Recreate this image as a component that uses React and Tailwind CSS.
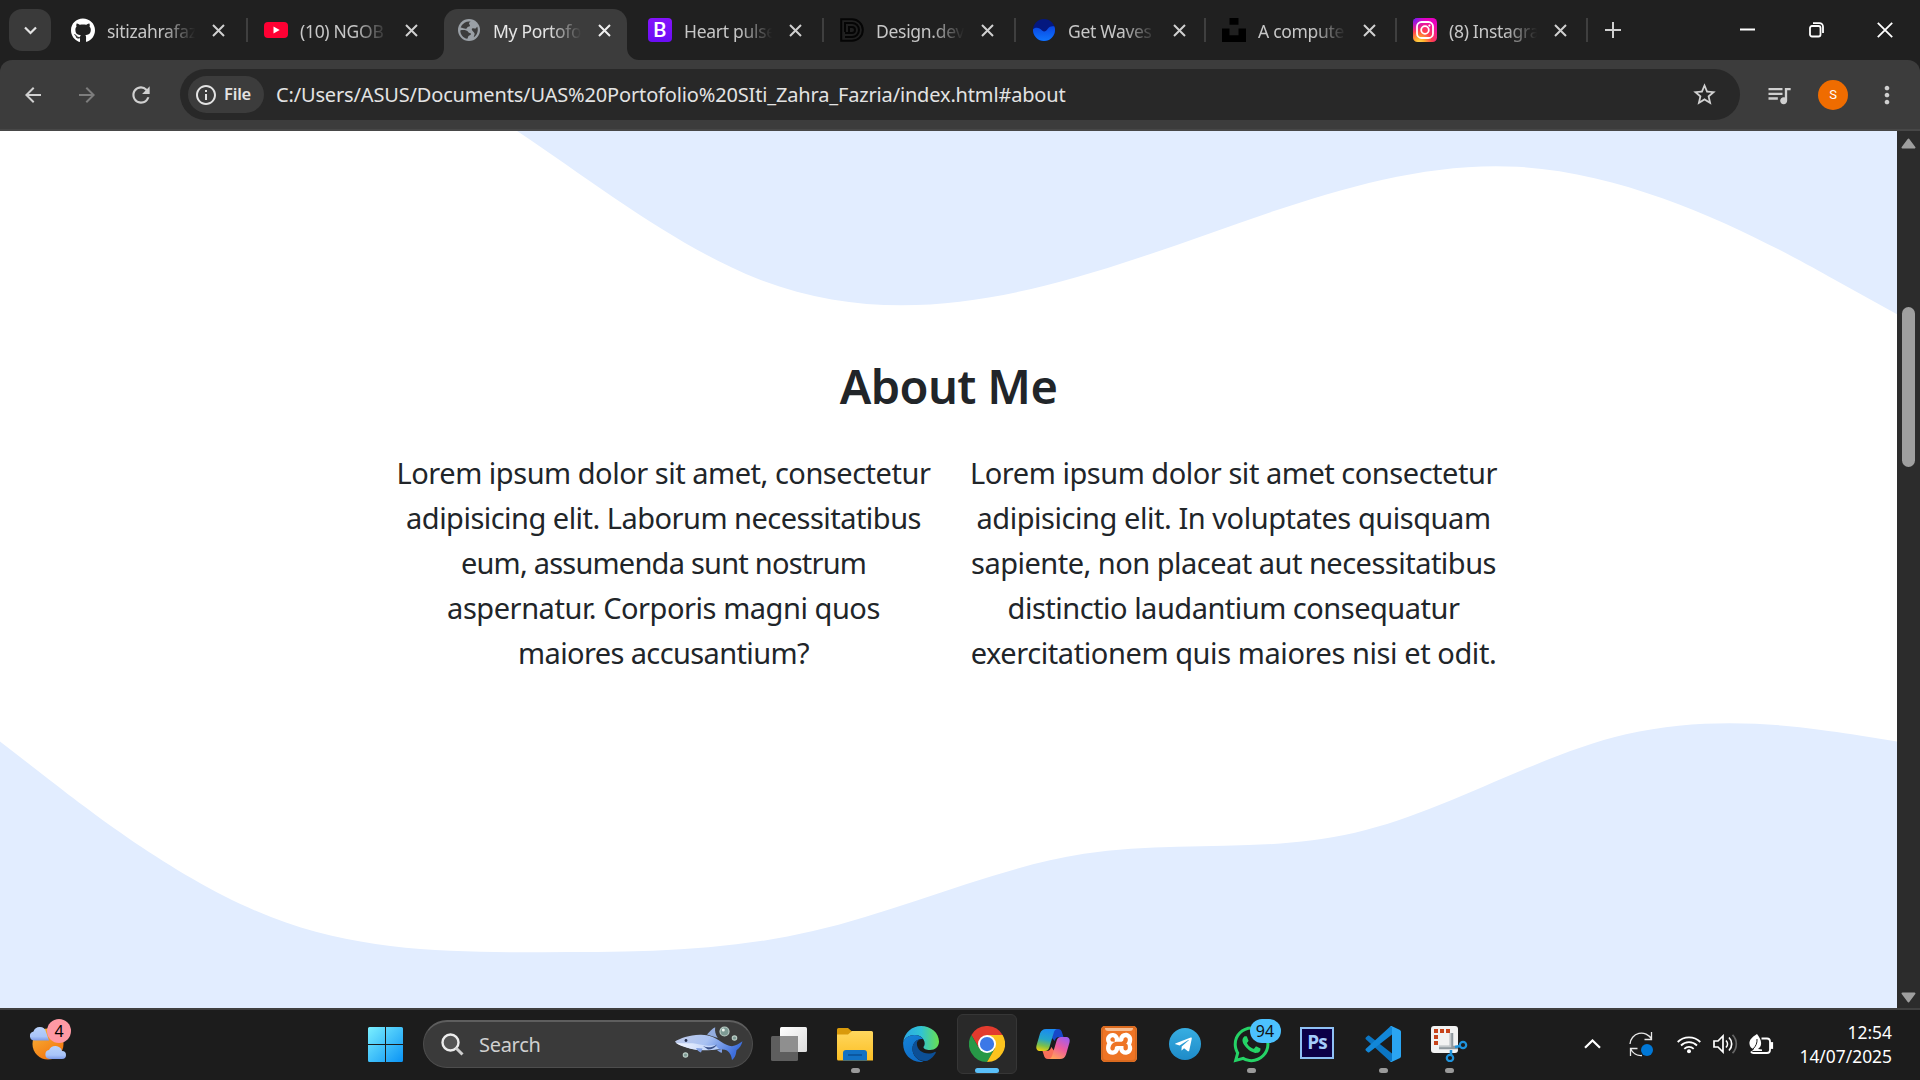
import React from "react";
import { FaGithub, FaTelegramPlane, FaWhatsapp } from "react-icons/fa";
import { MdArrowBack, MdArrowForward, MdRefresh, MdStarBorder, MdQueueMusic, MdMoreVert, MdInfoOutline } from "react-icons/md";
import { SiXampp } from "react-icons/si";

/* Smooth wave: a uniform B-spline through evenly spaced control heights. */
function wave(points, step, bottom) {
  const n = points.length - 1;
  let d = `M0,${points[0]}L${step / 6},${(5 * points[0] + points[1]) / 6}`;
  for (let i = 1; i <= n; i++) {
    const a = points[i - 1];
    const b = points[i];
    const last = i === n;
    const ex = last ? (i - 1 / 6) * step : i * step;
    const ey = last ? (a + 5 * b) / 6 : (a + 4 * b + points[i + 1]) / 6;
    d += `C${(i - 2 / 3) * step},${(2 * a + b) / 3},${(i - 1 / 3) * step},${(a + 2 * b) / 3},${ex},${ey}`;
  }
  return d + `L${n * step},${points[n]}L${n * step},${bottom}L0,${bottom}Z`;
}
const heights = (base, ks) => ks.map((k) => base + k * 42.16);
const TOP_WAVE = wave(heights(183.3, [-6, -8, 1, -1, -5, 0]), 379.4, 877);
const BOTTOM_WAVE = wave(heights(610.4, [0, 5, 5, 5, 2, 3, -1, 0]), 271, 877);

function Cross({ size = 13, className = "" }) {
  return (
    <svg width={size} height={size} viewBox="0 0 13 13" className={className}>
      <path d="M1 1l11 11M12 1L1 12" stroke="currentColor" strokeWidth="2" fill="none" />
    </svg>
  );
}

const YouTube = () => (
  <svg width="24" height="24" viewBox="0 0 24 24">
    <rect y="4" width="24" height="16" rx="4" fill="#ff0033" />
    <path d="M9.500 8.500v7l6.200-3.500z" fill="#fff" />
  </svg>
);
const Globe = () => (
  <svg width="24" height="24" viewBox="0 0 24 24">
    <circle cx="12" cy="12" r="11" fill="#9aa0a6" />
    <path d="M12.500 3.400c-1.600 1.300-2 2-.6 3.200 1 1 .2 1.900-1.200 2.300-1 .3-.6 1.900-2 2.300-1.300.3-3.300-.2-5.300-.4A8.800 8.800 0 0 1 12.500 3.400z" fill="#3c3c3c" transform="rotate(8 12 12)" />
    <path d="M3.300 12.400c2.700-.6 6.700-.4 7.900 1.500.7 1.200 2.700.8 2.800 2 0 1.300-2.200 1.200-2.800 2.500-.4.9-.3 1.600-.9 2.300-4-.7-7-4.300-7-8.300z" fill="#3c3c3c" />
    <path d="M15.200 10.500c1.500-.9 2.300.4 3.400 0 1-.4.800-1.500 1.700-1.700 1.300 3.700 0 8.200-3.400 10.500-.5-1.500 1.300-2.500.6-4.100-.6-1.300-3.900-3.400-2.300-4.700z" fill="#3c3c3c" />
  </svg>
);
const BootstrapMark = () => (
  <div className="flex h-6 w-6 items-center justify-center rounded-[4px] bg-gradient-to-b from-[#8513fb] to-[#6b0df5] font-['Roboto',sans-serif] text-[21px] leading-none font-medium text-white">B</div>
);
const DesignMark = () => (
  <svg width="24" height="24" viewBox="0 0 24 24" fill="none" stroke="#050505" strokeWidth="2">
    <path d="M1.200 1.200H12a10.800 10.800 0 0 1 0 21.600H1.200z" />
    <path d="M5 14V5h7a7 7 0 0 1 0 14H5M9 16V9h3a3 3 0 0 1 0 6H5" />
  </svg>
);
const WavesMark = () => (
  <svg width="24" height="24" viewBox="0 0 24 24">
    <defs>
      <clipPath id="disc"><circle cx="12" cy="12" r="11" /></clipPath>
      <linearGradient id="sea" x1="0" y1="0" x2="0" y2="1"><stop offset="0" stopColor="#0a45e0" /><stop offset="1" stopColor="#0f78ff" /></linearGradient>
    </defs>
    <g clipPath="url(#disc)">
      <rect width="24" height="24" fill="#04187f" />
      <path d="M0 12C4 8.500 7 9.500 10 12.500c2.500 2.300 4 .5 6-2S20.500 7.500 24 9v15H0z" fill="url(#sea)" />
    </g>
  </svg>
);
const UnsplashMark = () => (
  <svg width="24" height="24" viewBox="0 0 24 24" fill="#000">
    <path d="M7.500 0h9v6.800h-9zM0 10.500h7.500v6.800h9v-6.800H24V24H0z" />
  </svg>
);
const InstagramMark = () => (
  <svg width="24" height="24" viewBox="0 0 24 24" fill="none" stroke="#fff">
    <defs>
      <radialGradient id="ig1" cx=".27" cy="1.050" r="1.050">
        <stop offset="0" stopColor="#fd5" /><stop offset=".2" stopColor="#ffb02c" />
        <stop offset=".5" stopColor="#ff3f4f" /><stop offset="1" stopColor="#e800c0" />
      </radialGradient>
      <radialGradient id="ig2" cx="0" cy="0" r=".6">
        <stop offset="0" stopColor="#4a2cff" /><stop offset="1" stopColor="#c800e8" stopOpacity="0" />
      </radialGradient>
    </defs>
    <rect width="24" height="24" rx="4.500" fill="url(#ig1)" stroke="none" />
    <rect width="24" height="24" rx="4.500" fill="url(#ig2)" stroke="none" />
    <rect x="4" y="4" width="16" height="16" rx="4.600" strokeWidth="1.800" />
    <circle cx="12" cy="12" r="3.800" strokeWidth="1.800" />
    <circle cx="16.400" cy="7.600" r="1.100" fill="#fff" stroke="none" />
  </svg>
);

const TABS = [
  { icon: <FaGithub size={25} color="#fff" />, title: "sitizahrafaz", width: "w-[193px]", divider: true },
  { icon: <YouTube />, title: "(10) NGOB", width: "w-[193px]" },
  { icon: <Globe />, title: "My Portofo", width: "w-[191px]", active: true },
  { icon: <BootstrapMark />, title: "Heart pulse", width: "w-[192px]", divider: true },
  { icon: <DesignMark />, title: "Design.dev", width: "w-[192px]", divider: true },
  { icon: <WavesMark />, title: "Get Waves", width: "w-[190px]", divider: true },
  { icon: <UnsplashMark />, title: "A compute", width: "w-[191px]", divider: true },
  { icon: <InstagramMark />, title: "(8) Instagra", width: "w-[191px]", divider: true },
];

function Tab({ icon, title, width, active, divider }) {
  return (
    <div className={`relative flex h-[60px] shrink-0 items-center ${width}`}>
      {active && (
        <div className="absolute top-[9px] right-[5px] bottom-0 left-[3px] rounded-t-[14px] bg-[#3c3c3c]">
          <svg className="absolute bottom-0 -left-3" width="12" height="12"><path d="M12 0v12H0A12 12 0 0 0 12 0z" fill="#3c3c3c" /></svg>
          <svg className="absolute -right-3 bottom-0" width="12" height="12"><path d="M0 0v12h12A12 12 0 0 1 0 0z" fill="#3c3c3c" /></svg>
        </div>
      )}
      <div className="relative ml-4 flex h-6 w-6 items-center justify-center">{icon}</div>
      <div className={`relative mt-[2px] ml-3 w-[92px] text-[17.500px] tracking-[-0.300px] whitespace-nowrap [mask-image:linear-gradient(to_right,#000_60%,transparent_96%)] ${active ? "text-[#e6e6e6]" : "text-[#c7c7c7]"}`}>{title}</div>
      <Cross className={`relative ml-[13px] shrink-0 ${active ? "text-[#f0f0f0]" : "text-[#d0d0d0]"}`} />
      {divider && <div className="absolute right-0 h-6 w-[2px] bg-[#3f3f3f]" />}
    </div>
  );
}

function TabStrip() {
  return (
    <div className="flex h-[60px] items-center bg-[#202020]">
      <div className="ml-[9px] flex h-[42px] w-[42px] items-center justify-center rounded-[13px] bg-[#3a3a3a]">
        <svg width="13" height="9" viewBox="0 0 13 9"><path d="M1 1.500l5.500 5.500L12 1.500" stroke="#e3e3e3" strokeWidth="2.200" fill="none" /></svg>
      </div>
      <div className="ml-1 flex">{TABS.map((t) => <Tab key={t.title} {...t} />)}</div>
      <svg className="ml-[17px]" width="16" height="16"><path d="M8 0v16M0 8h16" stroke="#d0d0d0" strokeWidth="2" /></svg>
      <div className="ml-auto flex items-center text-white">
        <svg width="15" height="16"><path d="M0 7.500h15" stroke="#fff" strokeWidth="2" /></svg>
        <svg className="ml-[54px]" width="15" height="16" fill="none" stroke="#fff" strokeWidth="1.800">
          <rect x="1" y="4" width="10.500" height="10.500" rx="2" /><path d="M4 1.200h6.500a3.500 3.500 0 0 1 3.500 3.500V11" />
        </svg>
        <svg className="mr-[27px] ml-[53px]" width="16" height="16"><path d="M.8.800l14.400 14.400M15.200.800L.8 15.200" stroke="#fff" strokeWidth="1.800" /></svg>
      </div>
    </div>
  );
}

function Toolbar() {
  return (
    <div className="h-[71px] bg-[#202020]">
      <div className="flex h-[71px] items-center rounded-t-[12px] border-b-2 border-[#474747] bg-[#3c3c3c]">
        <MdArrowBack className="ml-[21px]" size={24} color="#d0d0d0" />
        <MdArrowForward className="ml-[30px]" size={24} color="#7d7d7d" />
        <MdRefresh className="ml-[29px]" size={26} color="#d0d0d0" />
        <div className="ml-[26px] flex h-[51px] w-[1560px] items-center rounded-full bg-[#282828] pl-2">
          <div className="flex h-[37px] w-[76px] items-center rounded-full bg-[#3c3c3c] pl-[6px]">
            <MdInfoOutline size={24} color="#e3e3e3" />
            <span className="ml-[6px] text-[16.500px] font-semibold tracking-[-0.200px] text-[#e3e3e3]">File</span>
          </div>
          <span className="ml-3 text-[20px] tracking-[-0.160px] whitespace-nowrap text-[#e3e3e3]">C:/Users/ASUS/Documents/UAS%20Portofolio%20SIti_Zahra_Fazria/index.html#about</span>
          <MdStarBorder className="mr-[22px] ml-auto" size={27} color="#d0d0d0" />
        </div>
        <MdQueueMusic className="ml-[25px]" size={28} color="#d0d0d0" />
        <div className="ml-[25px] flex h-[30px] w-[30px] items-center justify-center rounded-full bg-[#ef6c00] font-['Roboto',sans-serif] text-[13px] text-white">S</div>
        <MdMoreVert className="ml-[25px]" size={28} color="#d0d0d0" />
      </div>
    </div>
  );
}

const LEFT = [
  ["Lorem ipsum dolor sit amet, consectetur", "tracking-[-0.480px]"],
  ["adipisicing elit. Laborum necessitatibus", "tracking-[-0.520px]"],
  ["eum, assumenda sunt nostrum", "tracking-[-0.780px]"],
  ["aspernatur. Corporis magni quos", "tracking-[-0.460px]"],
  ["maiores accusantium?", "tracking-[-0.620px]"],
];
const RIGHT = [
  ["Lorem ipsum dolor sit amet consectetur", "tracking-[-0.470px]"],
  ["adipisicing elit. In voluptates quisquam", "tracking-[-0.450px]"],
  ["sapiente, non placeat aut necessitatibus", "tracking-[-0.510px]"],
  ["distinctio laudantium consequatur", "tracking-[-0.500px]"],
  ["exercitationem quis maiores nisi et odit.", "tracking-[-0.420px]"],
];

function Paragraph({ lines }) {
  return (
    <p className="w-[570px] text-center text-[29px] leading-[45px]">
      {lines.map(([text, tracking]) => <span key={text} className={`block whitespace-nowrap ${tracking}`}>{text}</span>)}
    </p>
  );
}

function Page() {
  return (
    <main className="flex h-[877px]">
      <section className="relative h-full w-[1897px] overflow-hidden bg-[#e2edff] text-[#212529]">
        <svg className="absolute inset-0" width="1897" height="877">
          <path d={TOP_WAVE} fill="#fff" />
          <path d={BOTTOM_WAVE} fill="#e2edff" />
        </svg>
        <div className="relative flex flex-col items-center pt-[226px]">
          <h2 className="text-[47px] leading-[58px] font-semibold tracking-[-0.600px]">About Me</h2>
          <div className="mt-[35px] flex">
            <Paragraph lines={LEFT} />
            <Paragraph lines={RIGHT} />
          </div>
        </div>
      </section>
      <div className="flex w-[23px] flex-col items-center bg-[#2c2c2c]">
        <svg className="mt-[7px]" width="15" height="11"><path d="M7.500 1.500L13.500 9.500h-12z" fill="#9f9f9f" stroke="#9f9f9f" strokeWidth="2" strokeLinejoin="round" /></svg>
        <div className="mt-[158px] h-[160px] w-[13px] rounded-full bg-[#9f9f9f]" />
        <svg className="mt-auto mb-[5px]" width="15" height="11"><path d="M7.500 9.500L13.500 1.500h-12z" fill="#9f9f9f" stroke="#9f9f9f" strokeWidth="2" strokeLinejoin="round" /></svg>
      </div>
    </main>
  );
}

const Weather = () => (
  <svg width="38" height="36" viewBox="0 0 38 36">
    <defs>
      <linearGradient id="sun" x1="0" y1="0" x2=".6" y2="1"><stop offset="0" stopColor="#f6b73c" /><stop offset="1" stopColor="#f5760e" /></linearGradient>
      <linearGradient id="cl" x1="0" y1="0" x2="0" y2="1"><stop offset="0" stopColor="#b9d2fb" /><stop offset=".7" stopColor="#a9c4f8" /><stop offset="1" stopColor="#7e9be8" /></linearGradient>
    </defs>
    <circle cx="19" cy="18" r="15.500" fill="url(#sun)" />
    <path d="M5.500 14.500a4.500 4.500 0 0 1-1-8.900A6.500 6.500 0 0 1 17 6l3 8.500z" fill="url(#cl)" />
    <path d="M20.500 33a4.500 4.500 0 0 1-.5-8.900 7 7 0 0 1 13 .9 4 4 0 0 1 0 8z" fill="url(#cl)" />
  </svg>
);
const WindowsLogo = () => (
  <svg width="35" height="35" viewBox="0 0 35 35">
    <defs><linearGradient id="win" gradientUnits="userSpaceOnUse" x1="0" y1="0" x2="35" y2="35"><stop offset="0" stopColor="#7bf0ff" /><stop offset="1" stopColor="#0a93f5" /></linearGradient></defs>
    <path d="M1.500 0H17v17H0V1.500A1.500 1.500 0 0 1 1.500 0zM18 0h15.500A1.500 1.500 0 0 1 35 1.500V17H18zM0 18h17v17H1.500A1.500 1.500 0 0 1 0 33.500zM18 18h17v15.500a1.500 1.500 0 0 1-1.500 1.500H18z" fill="url(#win)" />
  </svg>
);
const Shark = () => (
  <svg width="70" height="38" viewBox="0 0 70 38">
    <defs>
      <linearGradient id="sh" x1="0" y1="0" x2="1" y2=".3"><stop offset="0" stopColor="#c3cdea" /><stop offset=".5" stopColor="#a9c2f2" /><stop offset="1" stopColor="#3e6fdc" /></linearGradient>
      <linearGradient id="bl" x1="0" y1="0" x2="1" y2="0"><stop offset="0" stopColor="#f3f6ff" /><stop offset="1" stopColor="#b6cdf8" /></linearGradient>
    </defs>
    <path d="M34 8.500c3-3 5-6 8.200-7.300-.6 4 .3 7.300 2.600 10.800z" fill="#93acde" />
    <path d="M2 15.500c5-3.200 14-6.500 25-6.800 9-.3 15 3 21 7 4 2.500 7 4 11 4.500 4-.5 7-2.500 10.500-5-1 4-3 7-6 9-.5 3.500-1 7-4.500 9.800-.5-4-2-7.500-5-9.500-5-1.500-9-1.300-14-.8-9 .8-19 .3-26-2.200C9 19.500 3.500 18 2 15.500z" fill="url(#sh)" />
    <path d="M3 17c8 1 14-.5 20 .8 8 1.700 12 2.500 19 1.200l4 4c-9 1.500-22 2.200-31-1C9 20.200 5 19 3 17z" fill="url(#bl)" />
    <path d="M23 22c1 2 2.500 3.500 5 4.500l1.500-4zM44 24c1.500 1.500 3 2.500 5 2.800L49 23z" fill="#7f9edf" />
    <path d="M30 20c5 2.200 9 1.500 14-1.600-2 3.500-5 5-9 5z" fill="#3a5188" />
    <circle cx="13" cy="14.500" r="1.400" fill="#222b4a" />
    <g fill="#7d9a94" stroke="#b9ccc4" strokeWidth="1.200"><circle cx="51.500" cy="5.500" r="4.500" /><circle cx="61.500" cy="12" r="2.200" /><circle cx="12.500" cy="29" r="2.200" /></g>
    <circle cx="50.300" cy="4" r="1.500" fill="#eef5ef" />
  </svg>
);
const TaskView = () => (
  <svg width="36" height="36" viewBox="0 0 36 36">
    <defs><linearGradient id="tv" x1="0" y1="0" x2="1" y2="1"><stop offset="0" stopColor="#fff" /><stop offset="1" stopColor="#dcdcdc" /></linearGradient></defs>
    <rect x="9" y="1" width="27" height="25" rx="1.500" fill="url(#tv)" />
    <rect y="10" width="27" height="25" rx="1.500" fill="#6a6a6a" fillOpacity=".85" />
    <path d="M9 10h18v16H9z" fill="#8f8f8f" />
  </svg>
);
const Folder = () => (
  <svg width="36" height="36" viewBox="0 0 36 36">
    <defs><linearGradient id="fo" x1="0" y1="0" x2="0" y2="1"><stop offset="0" stopColor="#ffd75e" /><stop offset="1" stopColor="#fcbf23" /></linearGradient></defs>
    <path d="M0 3.500A1.500 1.500 0 0 1 1.500 2H11l4 3.500V10H0z" fill="#d99a0b" />
    <path d="M0 8.500h11l4-3.500h19.500A1.500 1.500 0 0 1 36 6.500v28H1.500A1.500 1.500 0 0 1 0 33z" fill="url(#fo)" />
    <path d="M6 34.500V27a3 3 0 0 1 3-3h18a3 3 0 0 1 3 3v7.500z" fill="#1271c4" />
    <path d="M11 29h14" stroke="#0a4f94" strokeWidth="1.500" />
  </svg>
);
const Edge = () => (
  <svg width="36" height="36" viewBox="0 0 36 36">
    <defs>
      <linearGradient id="e1" x1="0" y1=".4" x2="1" y2=".4"><stop offset="0" stopColor="#2aa7e6" /><stop offset=".5" stopColor="#30c3d4" /><stop offset="1" stopColor="#69e04f" /></linearGradient>
      <linearGradient id="e2" x1="0" y1="0" x2=".5" y2="1"><stop offset="0" stopColor="#1583d8" /><stop offset="1" stopColor="#0f6cc6" /></linearGradient>
    </defs>
    <circle cx="18" cy="18" r="18" fill="#1c1c1c" />
    <path d="M.2 16C1.500 6.500 9 0 18 0c10 0 18 7 18 15.500 0 5-4 8.500-9 8.500-4 0-6.500-1.500-6.500-2.800 0-.9 1.200-1.300 1.200-4C21.500 12.500 17 9 11.500 9 6 9 2 12 .2 16z" fill="url(#e1)" />
    <path d="M.2 16C2 12 6 9 11.500 9c4 0 7 1.700 8.800 4.200C15 12 9.500 16 9.500 23c0 6 4.500 11 11 12.800C9 37.500-.8 28.500.2 16z" fill="url(#e2)" />
    <path d="M16.500 13.600C12 14.500 9 18.500 9.500 24c.8 7 7.500 12.500 15 10.700 3.500-1.700 6.500-4.500 8.200-7.800.4-1-.4-1.300-1-1-2 1-4 1.500-6.300 1.500-6.500 0-11.500-4.500-11.500-9.500 0-1.700.6-3.100 2.600-4.300z" fill="#0c4f96" />
  </svg>
);
const Chrome = () => (
  <svg width="36" height="36" viewBox="0 0 48 48">
    <path d="M3.200 12A24 24 0 0 1 44.800 12H24L13.600 30z" fill="#e33b2e" />
    <path d="M3.200 12L13.600 30 24 24 34.400 30 24 48A24 24 0 0 1 3.200 12z" fill="#279847" />
    <path d="M44.800 12A24 24 0 0 1 24 48L34.400 30 24 24V12z" fill="#fcc31e" />
    <circle cx="24" cy="24" r="12" fill="#fff" /><circle cx="24" cy="24" r="9.500" fill="#3b78e7" />
  </svg>
);
const Copilot = () => (
  <svg width="36" height="36" viewBox="0 0 36 36">
    <defs>
      <linearGradient id="c1" x1=".4" y1="0" x2=".2" y2="1"><stop offset="0" stopColor="#1b8cf0" /><stop offset=".45" stopColor="#25a6c9" /><stop offset=".75" stopColor="#7cc04a" /><stop offset="1" stopColor="#f2d00e" /></linearGradient>
      <linearGradient id="c2" x1=".8" y1="0" x2=".3" y2="1"><stop offset="0" stopColor="#a05cf0" /><stop offset=".5" stopColor="#ee5c9e" /><stop offset="1" stopColor="#ffa05a" /></linearGradient>
    </defs>
    <path d="M18 3h5c2.500 0 3.500 1.500 4.200 4l1.300 4h-4c-3 0-4 1.500-4.800 4L17 12z" fill="#1747c8" />
    <path d="M17 33h-4c-2.500 0-3.500-1.500-4.200-4L7.500 25h4c3 0 4-1.500 4.800-4l3 4z" fill="#f9705a" />
    <path d="M11 3h11c-2 .6-2.800 2-3.500 4.500L14.500 21c-.8 2.800-2 4-4.500 4H5.500C2 25 .7 23 1.500 19.500l3.500-12C6 4.500 8 3 11 3z" fill="url(#c1)" />
    <path d="M25 33H14c2-.6 2.800-2 3.500-4.500L21.500 15c.8-2.800 2-4 4.500-4h4.500c3.500 0 4.800 2 4 5.500l-3.500 12c-1 3-3 4.500-6 4.500z" fill="url(#c2)" />
  </svg>
);
const Xampp = () => (
  <div className="relative h-9 w-9 rounded-[5px] bg-white">
    <SiXampp size={36} color="#ee7425" />
    <div className="absolute inset-0 rounded-[5px] border-2 border-[#d2661c]/70" />
    <div className="absolute top-[2px] left-1 h-[3px] w-7 rounded-b-full bg-[#f6bf95]" />
  </div>
);
const Telegram = () => (
  <div className="flex h-8 w-8 items-center justify-center rounded-full bg-gradient-to-b from-[#37aee2] to-[#1e8bc8]">
    <FaTelegramPlane size={19} color="#fff" className="mr-[3px]" />
  </div>
);
const WhatsApp = () => (
  <div className="relative">
    <FaWhatsapp size={41} color="#25d366" />
    <span className="absolute -top-[5px] -right-[9px] flex h-6 w-[31px] items-center justify-center rounded-full bg-[#4cc2ff] text-[16px] text-[#111]">94</span>
  </div>
);
const Photoshop = () => (
  <div className="-mt-[3px] flex h-8 w-[34px] items-center justify-center border-2 border-[#8fc1f5] bg-[#0c0047] font-['Open_Sans',sans-serif] text-[19px] font-bold tracking-[-1px] text-[#a5cdfb]">Ps</div>
);
const VSCode = () => (
  <svg width="36" height="36" viewBox="0 0 36 36">
    <path d="M.8 11.500l2-1.800c.5-.4 1-.4 1.500 0L27 27.500V36c-1 0-1.500-.3-2-.8L.8 13.300c-.5-.6-.5-1.200 0-1.800z" fill="#0b76c4" />
    <path d="M.8 24.500l2 1.800c.5.400 1 .4 1.500 0L27 8.500V0c-1 0-1.500.3-2 .8L.8 22.700c-.5.600-.5 1.200 0 1.800z" fill="#1287d8" />
    <path d="M26.500 0l8 3.700c1 .5 1.500 1.200 1.500 2.300v24c0 1.100-.5 1.800-1.500 2.300l-8 3.700c-.8.200-1.400-.2-2-.8 1 .6 2.500.1 2.500-1.200V2c0-1.300-1.500-1.800-2.500-1.200.6-.6 1.200-1 2-.8z" fill="#2aa5f2" />
  </svg>
);
const Snip = () => (
  <svg width="37" height="36" viewBox="0 0 37 36">
    <rect width="27" height="27" rx="3" fill="#f2f2f2" />
    <path d="M3 5h17M5 3v17" stroke="#c8431a" strokeWidth="4" strokeDasharray="4 2" fill="none" />
    <path d="M20.500 7v16M8 21.500h19" stroke="#8f989e" strokeWidth="3.500" fill="none" />
    <path d="M19.500 7v13.500H8" stroke="#c3c8cb" strokeWidth="1.500" fill="none" />
    <circle cx="19" cy="32" r="3.200" stroke="#1f93dc" strokeWidth="2.200" fill="none" />
    <circle cx="32" cy="19" r="3.200" stroke="#1f93dc" strokeWidth="2.200" fill="none" />
    <path d="M20 24v5M24 21l5-1" stroke="#1f93dc" strokeWidth="2.500" />
  </svg>
);

const APPS = [
  { name: "taskview", icon: <TaskView /> },
  { name: "folder", icon: <Folder />, open: true },
  { name: "edge", icon: <Edge /> },
  { name: "chrome", icon: <Chrome />, active: true },
  { name: "copilot", icon: <Copilot /> },
  { name: "xampp", icon: <Xampp /> },
  { name: "telegram", icon: <Telegram /> },
  { name: "whatsapp", icon: <WhatsApp />, open: true },
  { name: "photoshop", icon: <Photoshop /> },
  { name: "vscode", icon: <VSCode />, open: true },
  { name: "snip", icon: <Snip />, open: true },
];

function Taskbar() {
  return (
    <footer className="flex h-[72px] items-center border-t-2 border-[#404040] bg-[#1c1c1c] pb-[2px]">
      <div className="relative ml-[29px] w-[38px]">
        <Weather />
        <span className="absolute -top-[7px] left-[18px] flex h-6 w-6 items-center justify-center rounded-full bg-[#ff99a4] text-[16px] text-black">4</span>
      </div>
      <div className="ml-[301px]"><WindowsLogo /></div>
      <div className="ml-5 flex h-12 w-[330px] items-center rounded-full border border-t-2 border-[#4d4d4d] border-t-[#5e5e5e] bg-[#3a3a3a] pl-[17px]">
        <svg width="23" height="23" viewBox="0 0 23 23"><circle cx="9.500" cy="9.500" r="8" fill="#555" stroke="#ededed" strokeWidth="2.400" /><path d="M15 15l6.500 6.500" stroke="#cfcfcf" strokeWidth="3" /></svg>
        <span className="ml-[15px] text-[20px] tracking-[-0.300px] text-[#d0d0d0]">Search</span>
        <div className="mr-[9px] ml-auto"><Shark /></div>
      </div>
      <div className="ml-[3px] flex">
        {APPS.map((a) => (
          <div key={a.name} className="flex w-[66px] justify-center">
            <div className={`relative flex h-[60px] w-[60px] items-center justify-center rounded-md border ${a.active ? "border-[#363636] bg-[#292929]" : "border-transparent"}`}>
              {a.icon}
              {a.active && <span className="absolute bottom-0 h-[5px] w-6 rounded-full bg-[#5ac0f9]" />}
              {a.open && <span className="absolute bottom-0 h-[5px] w-[9px] rounded-full bg-[#9a9a9a]" />}
            </div>
          </div>
        ))}
      </div>
      <svg className="ml-auto" width="17" height="10"><path d="M1 8.800l7.500-7.300L16 8.800" stroke="#fff" strokeWidth="2.200" fill="none" /></svg>
      <svg className="ml-7" width="25" height="26" viewBox="0 0 25 26" fill="none" stroke="#e8e8e8" strokeWidth="1.300">
        <path d="M1 13A11.500 11.500 0 0 1 22.500 8M22.500 1v7.500h-7M1.500 25v-7.500h7M1.500 17.500A11.500 11.500 0 0 0 13 24.500" />
        <circle cx="18" cy="19" r="6" fill="#0078d7" stroke="none" />
      </svg>
      <svg className="ml-[23px]" width="24" height="19" viewBox="0 0 24 19" fill="none" stroke="#fff" strokeWidth="1.800">
        <path d="M.7 7a16 16 0 0 1 22.600 0M4 10.500a11.300 11.300 0 0 1 16 0M7.300 13.800a6.700 6.700 0 0 1 9.400 0" /><circle cx="12" cy="16.300" r="2" fill="#fff" stroke="none" />
      </svg>
      <svg className="ml-3" width="25" height="20" viewBox="0 0 25 20" fill="none" stroke="#fff" strokeWidth="1.700">
        <path d="M1 7h4l5-5v16l-5-5H1zM13 6.500a5 5 0 0 1 0 7M16 3.500a9.200 9.200 0 0 1 0 13" /><path d="M19.500.800a13 13 0 0 1 0 18.400" stroke="#666" />
      </svg>
      <svg className="ml-[11px]" width="25" height="21" viewBox="0 0 25 21" fill="none" stroke="#fff" strokeWidth="1.800">
        <path d="M12.500 4.500H18a3 3 0 0 1 3 3V16a3 3 0 0 1-3 3H4.500a3 3 0 0 1-2.500-1.500" /><path d="M22 9h1.200v5H22z" fill="#fff" />
        <path d="M8 0C3 3 0 6 .5 10c.3 3 2 4.500 4.500 5L3 17h10V15.500L9 15c2.500-2 3.500-4 3-7-.3-2.500-2-5.500-4-8z" fill="#fff" stroke="none" />
        <path d="M8 5c.3 4-1 7-4 10" stroke="#1c1c1c" strokeWidth="1" />
      </svg>
      <div className="mr-[28px] ml-[24px] w-[94px] text-right text-[17.400px] leading-[24px] whitespace-nowrap text-white">
        <div>12:54</div>
        <div>14/07/2025</div>
      </div>
    </footer>
  );
}

export default function App() {
  return (
    <div className="h-[1080px] w-[1920px] overflow-hidden font-['Noto_Sans',sans-serif]">
      <TabStrip />
      <Toolbar />
      <Page />
      <Taskbar />
    </div>
  );
}
